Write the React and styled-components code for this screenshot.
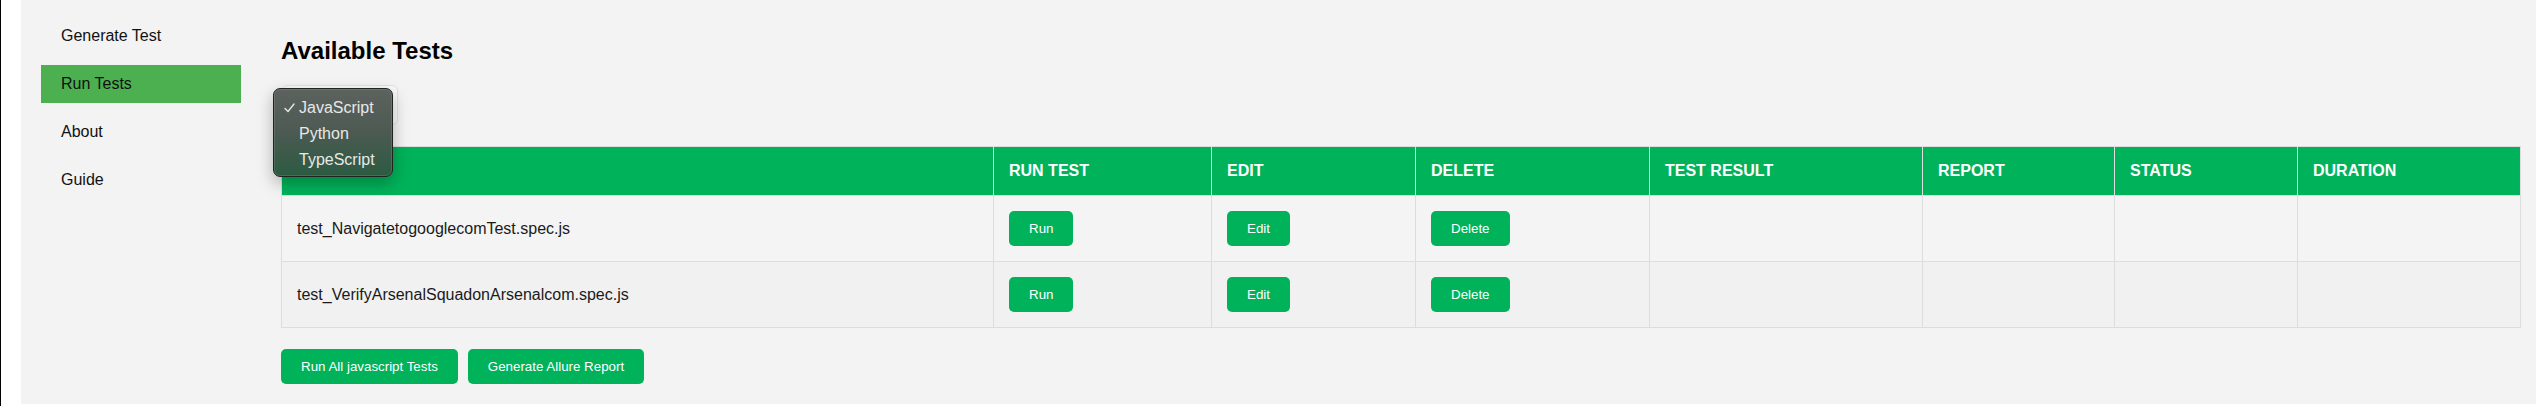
import React, { useState } from "react";
import styled, { createGlobalStyle } from "styled-components";

const GlobalStyle = createGlobalStyle`
  html, body {
    margin: 0;
    padding: 0;
    background: #ffffff;
    font-family: "Liberation Sans", Arial, Helvetica, sans-serif;
  }
`;

const navItems = ["Generate Test", "Run Tests", "About", "Guide"];
const languages = ["JavaScript", "Python", "TypeScript"];
const columns = [
  { label: "", width: 712 },
  { label: "Run Test", width: 218 },
  { label: "Edit", width: 204 },
  { label: "Delete", width: 234 },
  { label: "Test Result", width: 273 },
  { label: "Report", width: 192 },
  { label: "Status", width: 183 },
  { label: "Duration", width: 223 },
];
const tests = [
  "test_NavigatetogooglecomTest.spec.js",
  "test_VerifyArsenalSquadonArsenalcom.spec.js",
];

const App = () => {
  const [active, setActive] = useState("Run Tests");
  const [lang, setLang] = useState("JavaScript");

  return (
    <>
      <GlobalStyle />
      <Window>
        <Layout>
          <Sidebar>
            {navItems.map((item) => (
              <NavItem
                key={item}
                $active={item === active}
                onClick={() => setActive(item)}
              >
                {item}
              </NavItem>
            ))}
          </Sidebar>

          <Main>
            <Title>Available Tests</Title>

            <SelectWrap>
              <SelectBox>
                <span>{lang}</span>
                <Chevron>⌄</Chevron>
              </SelectBox>
              {/* 열려 있는 언어 선택 메뉴 */}
              <Popup>
                {languages.map((l) => (
                  <PopupItem key={l} onClick={() => setLang(l)}>
                    <CheckSlot>
                      {l === lang && (
                        <svg width="11" height="10" viewBox="0 0 11 10">
                          <polyline
                            points="1,5.5 4,8.5 10,1"
                            fill="none"
                            stroke="#e6e6e6"
                            strokeWidth="1.4"
                            strokeLinecap="round"
                            strokeLinejoin="round"
                          />
                        </svg>
                      )}
                    </CheckSlot>
                    {l}
                  </PopupItem>
                ))}
              </Popup>
            </SelectWrap>

            <TestTable>
              <colgroup>
                {columns.map((c, i) => (
                  <col key={i} style={{ width: c.width }} />
                ))}
              </colgroup>
              <thead>
                <tr>
                  {columns.map((c, i) => (
                    <Th key={i}>{c.label}</Th>
                  ))}
                </tr>
              </thead>
              <tbody>
                {tests.map((t) => (
                  <Row key={t}>
                    <Td>{t}</Td>
                    <Td>
                      <ActionButton>Run</ActionButton>
                    </Td>
                    <Td>
                      <ActionButton>Edit</ActionButton>
                    </Td>
                    <Td>
                      <ActionButton>Delete</ActionButton>
                    </Td>
                    <Td />
                    <Td />
                    <Td />
                    <Td />
                  </Row>
                ))}
              </tbody>
            </TestTable>

            <Footer>
              <ActionButton>Run All javascript Tests</ActionButton>
              <ActionButton>Generate Allure Report</ActionButton>
            </Footer>
          </Main>
        </Layout>
      </Window>
    </>
  );
};

export default App;

const Window = styled.div`
  border-left: 1px solid #000;
  padding-left: 20px;
  background: #ffffff;
  min-height: 406px;
  box-sizing: border-box;
`;

const Layout = styled.div`
  display: flex;
  background: #f3f3f3;
`;

const Sidebar = styled.nav`
  width: 200px;
  flex-shrink: 0;
  padding: 17px 20px;
`;

const NavItem = styled.div`
  padding: 10px 20px;
  margin-bottom: 10px;
  font-size: 16px;
  color: #111;
  cursor: pointer;
  background: ${(p) => (p.$active ? "#4caf50" : "transparent")};
`;

const Main = styled.main`
  flex: 1;
  min-width: 0;
  padding: 17px 16px 20px 20px;
`;

const Title = styled.h2`
  margin: 20px 0;
  font-size: 24px;
  font-weight: bold;
  color: #000;
`;

const SelectWrap = styled.div`
  position: relative;
  width: 116px;
  margin: 0 0 21px 1px;
`;

const SelectBox = styled.div`
  height: 40px;
  box-sizing: border-box;
  display: flex;
  align-items: center;
  justify-content: space-between;
  padding: 0 8px 0 12px;
  background: #fafafa;
  border: 1px solid #e2e2e2;
  border-radius: 6px;
  font-size: 16px;
  color: #222;
`;

const Chevron = styled.span`
  font-size: 12px;
  color: #666;
`;

const Popup = styled.div`
  position: absolute;
  left: -9px;
  top: 3px;
  width: 120px;
  height: 89px;
  box-sizing: border-box;
  padding: 6px 0;
  border-radius: 7px;
  border: 1px solid #1f2421;
  background: linear-gradient(180deg, #5d625f 0%, #4c5a52 50%, #2b5b41 100%);
  box-shadow: 0 6px 16px rgba(0, 0, 0, 0.28),
    inset 0 0 0 1px rgba(255, 255, 255, 0.12);
  z-index: 5;
`;

const PopupItem = styled.div`
  display: flex;
  align-items: center;
  height: 26px;
  font-size: 16px;
  color: #e8e8e8;
  cursor: default;
`;

const CheckSlot = styled.span`
  width: 25px;
  padding-left: 10px;
  box-sizing: border-box;
  display: flex;
  align-items: center;
`;

const TestTable = styled.table`
  width: 100%;
  table-layout: fixed;
  border-collapse: collapse;
`;

const Th = styled.th`
  background: #00b25a;
  color: #fff;
  text-align: left;
  text-transform: uppercase;
  font-size: 16px;
  font-weight: bold;
  padding: 15px;
  border: 1px solid #dddddd;
`;

const Row = styled.tr`
  background: #f4f4f4;
  &:nth-child(even) {
    background: #f1f1f1;
  }
`;

const Td = styled.td`
  padding: 15px;
  border: 1px solid #dddddd;
  font-size: 16px;
  color: #1a1a1a;
  height: 35px;
`;

const ActionButton = styled.button`
  background: #00b25a;
  color: #fff;
  border: none;
  border-radius: 5px;
  padding: 10px 20px;
  font-family: "Liberation Sans", Arial, Helvetica, sans-serif;
  font-size: 13.33px;
  line-height: normal;
  cursor: pointer;
`;

const Footer = styled.div`
  display: flex;
  gap: 10px;
  margin-top: 21px;
`;
